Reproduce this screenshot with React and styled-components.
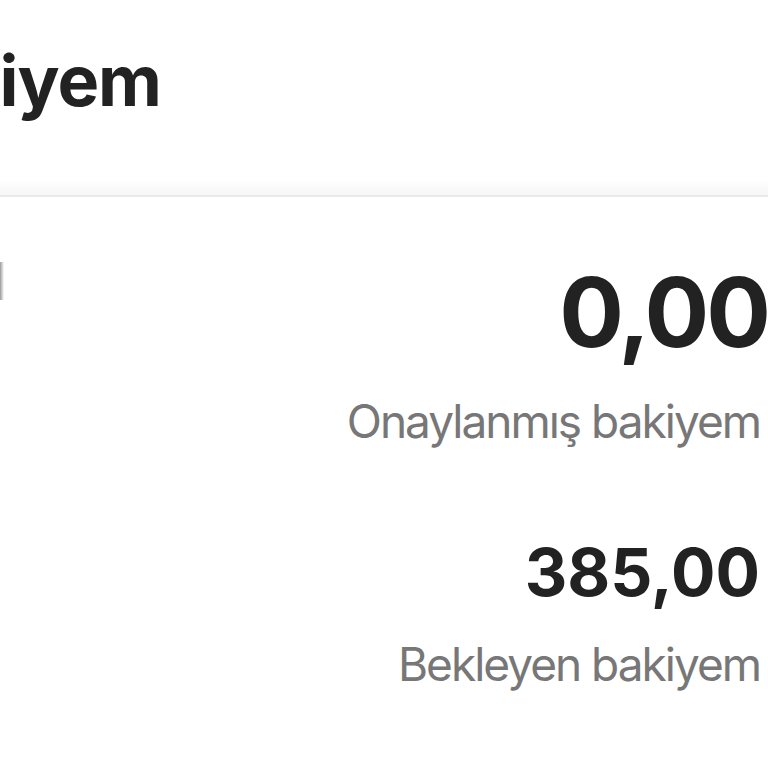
import React from "react";
import styled, { createGlobalStyle } from "styled-components";

const GlobalStyle = createGlobalStyle`
  html, body {
    margin: 0;
    padding: 0;
    background: #ffffff;
    overflow: hidden;
  }
  body {
    font-family: Inter, "Noto Sans", "Liberation Sans", sans-serif;
    color: #222222;
  }
`;

const Page = styled.div`
  width: 768px;
  height: 768px;
  overflow: hidden;
  background: #ffffff;
`;

const Header = styled.header`
  height: 197px;
  box-sizing: border-box;
  padding-top: 46px;
  background: linear-gradient(to bottom, #ffffff 0%, #ffffff 92%, #f6f6f6 100%);
  border-bottom: 2px solid #e9e9e9;
  overflow: hidden;
`;

const Title = styled.h1`
  margin: 0 0 0 -125px;
  font-size: 70px;
  line-height: 1;
  font-weight: 700;
  letter-spacing: -1px;
  color: #222222;
  white-space: nowrap;
`;

const Body = styled.main`
  display: flex;
  justify-content: space-between;
`;

const Side = styled.div`
  padding-top: 65px;
`;

const Mark = styled.div`
  width: 4px;
  height: 38px;
  background: linear-gradient(to right, #9a9a9a, rgba(255, 255, 255, 0));
`;

const Balances = styled.div`
  display: flex;
  flex-direction: column;
  align-items: flex-end;
  padding-top: 67px;
  padding-right: 8px;
`;

const Amount = styled.div`
  font-size: ${(p) => p.size}px;
  line-height: 1;
  font-weight: 700;
  letter-spacing: ${(p) => p.tracking || 0}px;
  color: #222222;
  margin-top: ${(p) => p.gap || 0}px;
  margin-right: ${(p) => p.shift || 0}px;
  white-space: nowrap;
`;

const Label = styled.div`
  font-size: 46px;
  line-height: 1;
  font-weight: 400;
  letter-spacing: -2px;
  color: #777777;
  margin-top: ${(p) => p.gap}px;
  white-space: nowrap;
`;

export default function App() {
  return (
    <Page>
      <GlobalStyle />
      <Header>
        <Title>Bakiyem</Title>
      </Header>
      <Body>
        <Side>
          <Mark />
        </Side>
        <Balances>
          <Amount size={96} tracking={-3} shift={-8}>0,00</Amount>
          <Label gap={38}>Onaylanmış bakiyem</Label>
          <Amount size={66} gap={95}>385,00</Amount>
          <Label gap={36}>Bekleyen bakiyem</Label>
        </Balances>
      </Body>
    </Page>
  );
}
